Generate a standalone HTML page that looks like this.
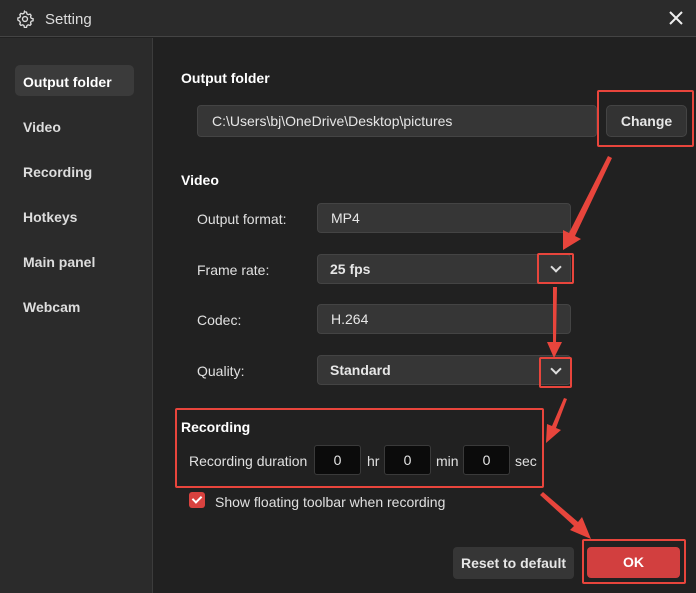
<!DOCTYPE html>
<html><head><style>
*{margin:0;padding:0;box-sizing:border-box}
body{width:696px;height:593px;background:#212121;font-family:"Liberation Sans",sans-serif;color:#e6e6e6;position:relative;overflow:hidden;font-size:14px}
.a{position:absolute}
.title{left:0;top:0;width:696px;height:37px;background:#2b2b2b;border-bottom:1px solid #444}
.side{left:0;top:38px;width:153px;height:555px;background:#2b2b2b;border-right:1px solid #3c3c3c}
.nav{left:23px;font-weight:bold;font-size:14px;color:#ddd}
.inp{background:#363636;border:1px solid #444;border-radius:4px;height:30px;line-height:28px;padding-left:13px;color:#e6e6e6}
.lbl{color:#e0e0e0;font-size:14px}
.red{border:2px solid #e8453c;border-radius:2px}
.dur{background:#0b0b0b;border:1px solid #3a3a3a;border-radius:3px;width:47px;height:30px;line-height:28px;text-align:center;top:445px}
.chev{width:8px;height:8px;border-right:2px solid #ddd;border-bottom:2px solid #ddd;transform:rotate(45deg)}
</style></head><body>
<div class="a title"></div>
<svg class="a" style="left:16px;top:10px" width="18" height="18" viewBox="0 0 24 24" fill="none" stroke="#ddd" stroke-width="1.8"><path d="M12 2.5l2 .3.6 2.4 1.7 1 2.4-.7 1.4 1.5-.7 2.4 1 1.7 2.4.6v2.6l-2.4.6-1 1.7.7 2.4-1.4 1.5-2.4-.7-1.7 1-.6 2.4h-2.8l-.6-2.4-1.7-1-2.4.7-1.4-1.5.7-2.4-1-1.7L2.5 13.3v-2.6l2.4-.6 1-1.7-.7-2.4 1.4-1.5 2.4.7 1.7-1 .6-2.4z"/><circle cx="12" cy="12" r="3.3"/></svg>
<div class="a" style="left:45px;top:11px;font-size:15px;color:#ddd">Setting</div>
<svg class="a" style="left:669px;top:11px" width="14" height="14"><path d="M1 1L13 13M13 1L1 13" stroke="#eee" stroke-width="2"/></svg>
<div class="a side"></div>
<div class="a" style="left:15px;top:65px;width:119px;height:31px;background:#3b3b3b;border-radius:5px"></div>
<div class="a nav" style="top:74px;color:#fff">Output folder</div>
<div class="a nav" style="top:119px">Video</div>
<div class="a nav" style="top:164px">Recording</div>
<div class="a nav" style="top:209px">Hotkeys</div>
<div class="a nav" style="top:254px">Main panel</div>
<div class="a nav" style="top:299px">Webcam</div>

<div class="a" style="left:181px;top:70px;font-weight:bold;color:#fff">Output folder</div>
<div class="a inp" style="left:197px;top:105px;width:400px;height:32px;line-height:30px;padding-left:14px">C:\Users\bj\OneDrive\Desktop\pictures</div>
<div class="a inp" style="left:606px;top:105px;width:81px;height:32px;line-height:30px;padding:0;text-align:center;font-weight:bold;border-radius:5px;background:#333">Change</div>
<div class="a red" style="left:597px;top:90px;width:97px;height:57px"></div>

<div class="a" style="left:181px;top:172px;font-weight:bold;color:#fff">Video</div>
<div class="a lbl" style="left:197px;top:211px">Output format:</div>
<div class="a inp" style="left:317px;top:203px;width:254px">MP4</div>
<div class="a lbl" style="left:197px;top:262px">Frame rate:</div>
<div class="a inp" style="left:317px;top:254px;width:254px;font-weight:bold;padding-left:12px">25 fps</div>
<div class="a red" style="left:537px;top:253px;width:37px;height:31px"></div>
<div class="a chev" style="left:552px;top:263px"></div>
<div class="a lbl" style="left:197px;top:312px">Codec:</div>
<div class="a inp" style="left:317px;top:304px;width:254px">H.264</div>
<div class="a lbl" style="left:197px;top:363px">Quality:</div>
<div class="a inp" style="left:317px;top:355px;width:254px;font-weight:bold;padding-left:12px">Standard</div>
<div class="a red" style="left:539px;top:357px;width:33px;height:31px"></div>
<div class="a chev" style="left:552px;top:365px"></div>

<div class="a red" style="left:175px;top:408px;width:369px;height:80px"></div>
<div class="a" style="left:181px;top:419px;font-weight:bold;color:#fff">Recording</div>
<div class="a lbl" style="left:189px;top:453px">Recording duration</div>
<div class="a dur" style="left:314px">0</div>
<div class="a lbl" style="left:367px;top:453px">hr</div>
<div class="a dur" style="left:384px">0</div>
<div class="a lbl" style="left:436px;top:453px">min</div>
<div class="a dur" style="left:463px">0</div>
<div class="a lbl" style="left:515px;top:453px">sec</div>

<div class="a" style="left:189px;top:492px;width:16px;height:16px;background:#d9423f;border-radius:3px"></div>
<div class="a" style="left:194px;top:494px;width:6px;height:9px;border-right:2px solid #fff;border-bottom:2px solid #fff;transform:rotate(45deg)"></div>
<div class="a lbl" style="left:215px;top:494px">Show floating toolbar when recording</div>

<div class="a" style="left:453px;top:547px;width:121px;height:32px;background:#363636;border-radius:4px;text-align:center;line-height:32px;font-weight:bold">Reset to default</div>
<div class="a red" style="left:582px;top:539px;width:104px;height:45px"></div>
<div class="a" style="left:587px;top:547px;width:93px;height:31px;background:#d23f3f;border-radius:4px;text-align:center;line-height:31px;font-weight:bold;color:#fff">OK</div>

<svg class="a" style="left:0;top:0" width="696" height="593">
<g fill="#e8453c">
<polygon points="608,156 612,158 575,236 581,239 563,250 563,230 569,233"/>
<polygon points="553,287 557,287 556,342 562,342 554,358 547,342 553,342"/>
<polygon points="564,398 567,399 556,428 561,430 546,443 547,424 552,426"/>
<polygon points="540,495 543,492 578,522 582,517 591,539 570,530 574,526"/>
</g>
</svg>
</body></html>
